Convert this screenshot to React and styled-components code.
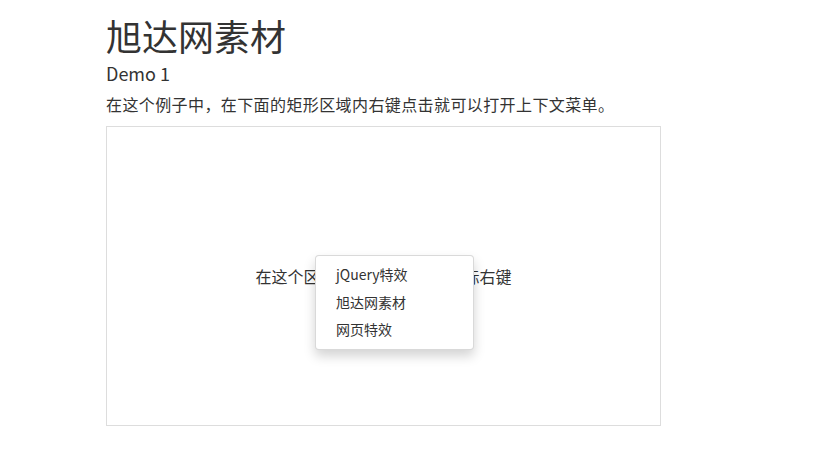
import React from 'react';
import styled, { createGlobalStyle } from 'styled-components';

const GlobalStyle = createGlobalStyle`
  body {
    margin: 0;
    background: #fff;
    color: #333;
    font-family: "Noto Sans CJK SC", "Noto Sans", sans-serif;
  }
`;

const Page = styled.div`
  padding: 15px 0 0 106px;
`;

const Title = styled.h1`
  margin: 0;
  font-size: 36px;
  font-weight: 400;
  line-height: 40px;
`;

const Subtitle = styled.h4`
  margin: 8px 0 0;
  font-size: 18px;
  font-weight: 400;
  line-height: 20px;
`;

const Intro = styled.p`
  margin: 10px 0 11px;
  font-size: 16px;
  line-height: 22px;
  letter-spacing: 0.4px;
`;

const Area = styled.div`
  position: relative;
  display: flex;
  align-items: center;
  justify-content: center;
  width: 553px;
  height: 298px;
  border: 1px solid #ddd;
  font-size: 16px;
`;

const Menu = styled.ul`
  position: absolute;
  left: 208px;
  top: 128px;
  width: 157px;
  margin: 0;
  padding: 5px 0;
  list-style: none;
  background: #fff;
  border: 1px solid rgba(0, 0, 0, 0.15);
  border-radius: 4px;
  box-shadow: 0 6px 12px rgba(0, 0, 0, 0.175);
`;

const MenuItem = styled.li`
  padding: 0 20px;
  font-size: 14px;
  line-height: 27.5px;
  color: #333;
`;

export default function App() {
  return (
    <Page>
      <GlobalStyle />
      <Title>旭达网素材</Title>
      <Subtitle>Demo 1</Subtitle>
      <Intro>在这个例子中，在下面的矩形区域内右键点击就可以打开上下文菜单。</Intro>
      <Area>
        在这个区域内任意位置点击鼠标右键
        <Menu>
          <MenuItem>jQuery特效</MenuItem>
          <MenuItem>旭达网素材</MenuItem>
          <MenuItem>网页特效</MenuItem>
        </Menu>
      </Area>
    </Page>
  );
}
